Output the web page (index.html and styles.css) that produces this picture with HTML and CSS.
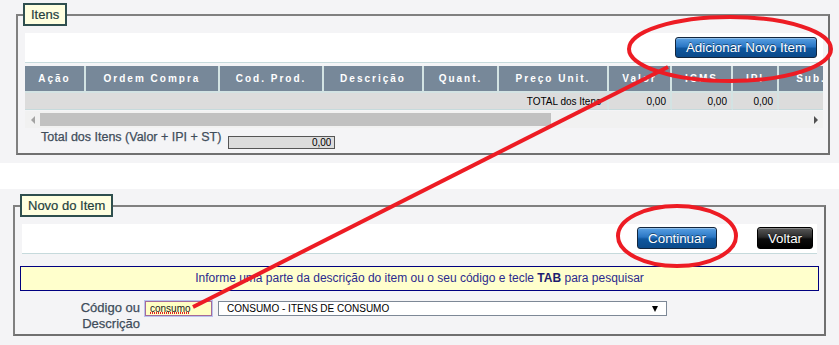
FILE: index.html
```html
<!DOCTYPE html>
<html lang="pt-BR">
<head>
<meta charset="utf-8">
<title>Itens</title>
<link rel="stylesheet" href="styles.css">
</head>
<body>
<section class="panel panel-itens">
  <fieldset class="box box-itens">
    <legend class="box-title">Itens</legend>
    <div class="toolbar toolbar-itens">
      <button class="btn btn-blue btn-add" type="button">Adicionar Novo Item</button>
    </div>
    <div class="grid-view">
      <table class="grid">
        <thead>
          <tr>
            <th class="c1">Ação</th>
            <th class="c2">Ordem Compra</th>
            <th class="c3">Cod. Prod.</th>
            <th class="c4">Descrição</th>
            <th class="c5">Quant.</th>
            <th class="c6">Preço Unit.</th>
            <th class="c7">Valor</th>
            <th class="c8">ICMS</th>
            <th class="c9">IPI</th>
            <th class="c10">Sub. Total</th>
          </tr>
        </thead>
        <tbody>
          <tr>
            <td class="total-label" colspan="6">TOTAL dos Itens</td>
            <td class="num">0,00</td>
            <td class="num">0,00</td>
            <td class="num">0,00</td>
            <td></td>
          </tr>
        </tbody>
      </table>
    </div>
    <div class="hscroll">
      <span class="arrow arrow-left"></span>
      <div class="track"><div class="thumb"></div></div>
      <span class="arrow arrow-right"></span>
    </div>
    <div class="sum-line">
      <label class="field-label sum-label" for="sum">Total dos Itens (Valor + IPI + ST)</label>
      <input class="sum-input" id="sum" value="0,00" readonly>
    </div>
  </fieldset>
</section>

<div class="spacer"></div>

<section class="panel panel-novo">
  <fieldset class="box box-novo">
    <legend class="box-title">Novo do Item</legend>
    <div class="toolbar toolbar-novo">
      <button class="btn btn-blue btn-continue" type="button">Continuar</button>
      <button class="btn btn-black btn-back" type="button">Voltar</button>
    </div>
    <div class="hint">Informe uma parte da descrição do item ou o seu código e tecle <b>TAB</b> para pesquisar</div>
    <div class="search-row">
      <label class="field-label search-label" for="code">Código ou<br>Descrição</label>
      <span class="code-field">
        <input class="code-input" id="code" value="consumo">
      </span>
      <div class="select-box">
        <span class="select-text">CONSUMO - ITENS DE CONSUMO</span>
        <span class="caret"></span>
      </div>
    </div>
  </fieldset>
</section>

<svg class="annotations" width="839" height="345" viewBox="0 0 839 345" aria-hidden="true">
  <ellipse cx="730" cy="49" rx="101" ry="32" fill="none" stroke="#ed1c24" stroke-width="4"/>
  <ellipse cx="677" cy="236" rx="59" ry="30" fill="none" stroke="#ed1c24" stroke-width="4"/>
  <line x1="193" y1="307" x2="668" y2="67" stroke="#ed1c24" stroke-width="4"/>
</svg>
</body>
</html>
```

FILE: styles.css
```css
* {
  box-sizing: border-box;
}

html, body {
  margin: 0;
  padding: 0;
  background: #ffffff;
}

body {
  position: relative;
  width: 839px;
  height: 345px;
  overflow: hidden;
  font-family: "Liberation Sans", Arial, sans-serif;
  font-size: 13px;
  color: #000;
}

.panel {
  background: #f4f4f6;
}

.panel-itens {
  height: 163px;
  padding: 3px 0 0 16px;
}

.spacer {
  height: 26px;
}

.panel-novo {
  height: 156px;
  padding: 5px 0 0 13px;
}

.box {
  margin: 0;
  border: 2px solid #808080;
  border-right-color: #707070;
  border-bottom-color: #707070;
  background: #f4f4f6;
  min-width: 0;
}

.box-itens {
  width: 814px;
  padding: 7px 5px 1px 7px;
}

.box-novo {
  width: 813px;
  height: 142px;
  padding: 7px 7px 0 7px;
}

.box-title {
  margin-left: -2px;
  padding: 0 6px;
  height: 23px;
  line-height: 19px;
  border: 2px solid #2f4f4f;
  background: #ffffe0;
  color: #243e3e;
  font-size: 13px;
  -webkit-text-stroke: 0.2px #243e3e;
}

.toolbar {
  display: flex;
  justify-content: flex-end;
  align-items: flex-start;
  height: 30px;
  background: #ffffff;
  border-bottom: 1px solid #c6dadc;
}

.toolbar-itens {
  padding: 4px 6px 0 0;
  margin-bottom: 3px;
}

.toolbar-novo {
  padding: 3px 4px 0 0;
  gap: 40px;
}

.btn {
  font-family: "Liberation Sans", Arial, sans-serif;
  font-size: 13.33px;
  color: #ffffff;
  border-radius: 3px;
  padding: 0;
  cursor: pointer;
  text-shadow: 0 -1px 0 rgba(0, 0, 0, 0.45);
}

.btn-blue {
  border: 1px solid #13263d;
  background: linear-gradient(#5aa1e3 0%, #2a76c4 45%, #0f579e 55%, #0b4a8a 100%);
  box-shadow: inset 0 1px 0 rgba(255, 255, 255, 0.35);
}

.btn-black {
  border: 1px solid #000000;
  background: linear-gradient(#5a5a5a 0%, #2a2a2a 45%, #0c0c0c 55%, #000000 100%);
  box-shadow: inset 0 1px 0 rgba(255, 255, 255, 0.3);
}

.btn-add {
  width: 142px;
  height: 21px;
}

.btn-continue {
  width: 80px;
  height: 22px;
}

.btn-back {
  width: 56px;
  height: 22px;
}

.grid-view {
  width: 798px;
  overflow: hidden;
}

.grid {
  table-layout: fixed;
  width: 858px;
  border-collapse: separate;
  border-spacing: 0;
}

.grid th {
  box-sizing: content-box;
  height: 25px;
  padding: 0;
  background: #778899;
  color: #ffffff;
  font-size: 10px;
  font-weight: bold;
  letter-spacing: 2px;
  text-align: center;
  white-space: nowrap;
  overflow: hidden;
  border-right: 2px solid #d3e3e3;
  border-bottom: 2px solid #d3e3e3;
}

.grid .c1 { width: 59px; }
.grid .c2 { width: 132px; }
.grid .c3 { width: 102px; }
.grid .c4 { width: 98px; }
.grid .c5 { width: 73px; }
.grid .c6 { width: 108px; }
.grid .c7 { width: 61px; }
.grid .c8 { width: 59px; }
.grid .c9 { width: 44px; }
.grid .c10 { width: 102px; }

.grid td {
  box-sizing: content-box;
  height: 16px;
  padding: 0 4px;
  background: #dcdcdc;
  font-size: 10px;
  border-right: 2px solid #d3e3e3;
  border-bottom: 1px solid #c6dadc;
  white-space: nowrap;
}

.grid .total-label {
  text-align: right;
  padding-right: 6px;
}

.grid .num {
  text-align: right;
}

.hscroll {
  display: flex;
  align-items: stretch;
  width: 798px;
  height: 17px;
  margin-top: 1px;
  background: #f1f1f1;
}

.arrow {
  flex: 0 0 15px;
  display: flex;
  align-items: center;
  justify-content: center;
}

.arrow::before {
  content: "";
  width: 0;
  height: 0;
  border-top: 4px solid transparent;
  border-bottom: 4px solid transparent;
}

.arrow-left::before {
  border-right: 4px solid #a3a3a3;
}

.arrow-right::before {
  border-left: 4px solid #505050;
}

.track {
  flex: 1;
  padding-top: 2px;
}

.thumb {
  width: 511px;
  height: 13px;
  background: #c1c1c1;
}

.sum-line {
  display: flex;
  align-items: flex-start;
  gap: 7px;
  height: 24px;
  padding: 2px 0 0 16px;
}

.field-label {
  color: #3f4d5b;
  font-size: 13px;
  line-height: 15px;
  -webkit-text-stroke: 0.25px #3f4d5b;
}

.sum-label {
  font-size: 12.5px;
}

.sum-input {
  width: 107px;
  height: 13px;
  margin-top: 6px;
  padding: 0 3px;
  border: 1px solid #555555;
  background: #dcdcdc;
  font-family: "Liberation Sans", Arial, sans-serif;
  font-size: 10px;
  text-align: right;
  color: #000;
  outline: none;
}

.hint {
  margin: 12px -2px 0;
  height: 25px;
  line-height: 23px;
  border: 1px solid #000080;
  background: #ffffcc;
  color: #2b2a8e;
  font-size: 12px;
  text-align: center;
}

.hint b {
  color: #1c1c70;
}

.search-row {
  display: flex;
  align-items: flex-start;
  margin-top: 9px;
}

.search-label {
  width: 118px;
  text-align: right;
  line-height: 16px;
  margin-right: 5px;
}

.code-field {
  position: relative;
  display: block;
  margin: 1px 6px 0 0;
}

.code-field::after {
  content: "";
  position: absolute;
  left: 5px;
  top: 11px;
  width: 40px;
  height: 2px;
  background: repeating-linear-gradient(90deg, #e02020 0 1px, transparent 1px 2px);
  pointer-events: none;
}

.code-input {
  display: block;
  width: 67px;
  height: 15px;
  padding: 0 4px;
  border: 1px solid #a46a9a;
  box-shadow: 0 0 0 1px #b9c3ee;
  background: #ffffc4;
  font-family: "Liberation Sans", Arial, sans-serif;
  font-size: 10px;
  color: #222;
  outline: none;
}

.select-box {
  display: flex;
  align-items: center;
  justify-content: space-between;
  width: 449px;
  height: 15px;
  margin-top: 1px;
  padding: 0 8px 0 8px;
  border: 1px solid #7d8896;
  background: #ffffff;
  font-size: 10px;
  color: #000;
}

.caret {
  width: 0;
  height: 0;
  border-left: 3px solid transparent;
  border-right: 3px solid transparent;
  border-top: 6px solid #000;
}

.annotations {
  position: absolute;
  top: 0;
  left: 0;
  pointer-events: none;
}
```
